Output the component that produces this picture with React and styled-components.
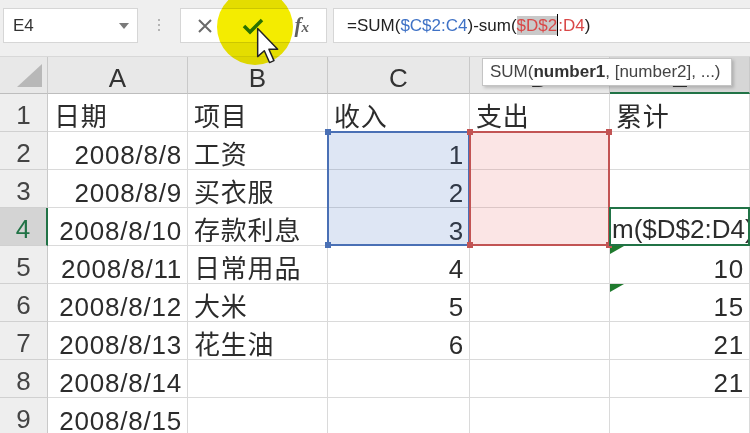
import React from 'react'
import styled, { createGlobalStyle } from 'styled-components'

const GlobalStyle = createGlobalStyle`
  html, body { margin: 0; padding: 0; background: #fff; }
  body { font-family: "Liberation Sans", "Noto Sans CJK SC", sans-serif; }
`

const Window = styled.div`
  position: relative;
  width: 750px;
  height: 433px;
  overflow: hidden;
  background: #fff;
`

// ---- formula bar
const FormulaBar = styled.div`
  display: flex;
  align-items: flex-start;
  height: 57px;
  box-sizing: border-box;
  padding: 8px 0 0 3px;
  background: #efefef;
  border-bottom: 1px solid #d8d8d8;
`
const NameBox = styled.div`
  display: flex;
  align-items: center;
  justify-content: space-between;
  width: 135px;
  height: 35px;
  box-sizing: border-box;
  padding: 0 8px 0 9px;
  background: #fff;
  border: 1px solid #d6d6d6;
  font-size: 17px;
  color: #333;
`
const Grip = styled.div`
  display: flex;
  flex-direction: column;
  align-items: center;
  gap: 3px;
  width: 42px;
  padding-top: 11px;
  span {
    width: 2px;
    height: 2px;
    background: #b4b4b4;
  }
`
const ButtonGroup = styled.div`
  display: grid;
  grid-template-columns: repeat(3, 1fr);
  align-items: center;
  justify-items: center;
  width: 147px;
  height: 35px;
  box-sizing: border-box;
  background: #fff;
  border: 1px solid #d6d6d6;
`
const Fx = styled.span`
  font-family: "Liberation Serif", serif;
  font-style: italic;
  font-weight: bold;
  font-size: 21px;
  color: #606060;
  small { font-size: 15px; }
`
const FormulaInput = styled.div`
  flex: 1;
  margin-left: 6px;
  height: 35px;
  box-sizing: border-box;
  padding-left: 13px;
  background: #fff;
  border: 1px solid #d6d6d6;
  border-right: none;
  font-size: 17px;
  line-height: 33px;
  color: #222;
  white-space: nowrap;
`
const Ref = styled.span`
  color: ${p => p.$color};
  background: ${p => p.$marked ? '#c9c9c9' : 'transparent'};
`
const Caret = styled.span`
  display: inline-block;
  width: 1px;
  height: 22px;
  background: #000;
  vertical-align: -5px;
`

// ---- sheet
const Sheet = styled.div`
  display: grid;
  grid-template-columns: 48px 140px 140px 142px 140px 140px;
  grid-template-rows: 37px repeat(9, 38px);
`
const Corner = styled.div`
  grid-row: 1;
  grid-column: 1;
  display: flex;
  justify-content: flex-end;
  align-items: flex-end;
  padding: 0 5px 6px 0;
  background: #e8e8e8;
  border-right: 1px solid #c9c9c9;
  border-bottom: 1px solid #bdbdbd;
  &::after {
    content: "";
    width: 0;
    height: 0;
    border-left: 25px solid transparent;
    border-bottom: 23px solid #b8b8b8;
  }
`
const ColHead = styled.div`
  grid-row: 1;
  grid-column: ${p => p.$c};
  box-sizing: border-box;
  padding-top: 6px;
  text-align: center;
  font-size: 26px;
  line-height: 30px;
  color: #333;
  background: ${p => p.$selected ? '#d6d6d6' : '#e8e8e8'};
  border-right: 1px solid #c9c9c9;
  border-bottom: ${p => p.$selected ? '2px solid #217346' : '1px solid #bdbdbd'};
`
const RowHead = styled.div`
  grid-row: ${p => p.$r};
  grid-column: 1;
  box-sizing: border-box;
  padding-top: 6px;
  text-align: center;
  font-size: 26px;
  line-height: 30px;
  color: ${p => p.$active ? '#217346' : '#444'};
  background: ${p => p.$active ? '#d4d4d4' : '#eeeeee'};
  border-bottom: 1px solid #d0d0d0;
  border-right: ${p => p.$active ? '2px solid #217346' : '1px solid #c9c9c9'};
`
const Cell = styled.div`
  position: relative;
  grid-row: ${p => p.$r};
  grid-column: ${p => p.$c};
  box-sizing: border-box;
  padding: 8px 5px 0 6px;
  text-align: ${p => p.$right ? 'right' : 'left'};
  font-size: 26px;
  line-height: 30px;
  letter-spacing: 0.8px;
  color: #2c2c2c;
  white-space: nowrap;
  border-right: 1px solid #dadada;
  border-bottom: 1px solid #dadada;
`
const ErrorMark = styled.span`
  position: absolute;
  top: 0;
  left: 0;
  width: 0;
  height: 0;
  border-top: 8px solid #1f7a2e;
  border-right: 14px solid transparent;
`
const ActiveCell = styled.div`
  grid-row: ${p => p.$r};
  grid-column: ${p => p.$c};
  z-index: 3;
  margin: -1px 0 0 -1px;
  box-sizing: border-box;
  padding: 5px 0 0 1px;
  overflow: hidden;
  white-space: nowrap;
  background: #fff;
  border: 2px solid #217346;
  font-size: 26px;
  line-height: 30px;
  color: #2c2c2c;
`
const Range = styled.div`
  position: relative;
  grid-row: 3 / 6;
  grid-column: ${p => p.$c};
  z-index: ${p => p.$z};
  margin: -1px 0 0 -1px;
  border: 2px solid ${p => p.$color};
  background: ${p => p.$fill};
  pointer-events: none;
`
const Handle = styled.span`
  position: absolute;
  width: 6px;
  height: 6px;
  background: ${p => p.$color};
  ${p => p.$top ? 'top: -4px;' : 'bottom: -4px;'}
  ${p => p.$left ? 'left: -4px;' : 'right: -4px;'}
`

// ---- overlays
const Tooltip = styled.div`
  position: absolute;
  left: 482px;
  top: 58px;
  width: 250px;
  height: 28px;
  box-sizing: border-box;
  padding-left: 7px;
  background: #fff;
  border: 1px solid #c4c4c4;
  box-shadow: 2px 2px 3px rgba(0, 0, 0, 0.18);
  font-size: 17px;
  line-height: 25px;
  color: #444;
  white-space: nowrap;
  b { color: #333; }
`
const Spot = styled.div`
  position: absolute;
  left: 217px;
  top: -11px;
  width: 76px;
  height: 76px;
  border-radius: 50%;
  background: #f4ec00;
  mix-blend-mode: multiply;
`
const Pointer = styled.svg`
  position: absolute;
  left: 256px;
  top: 27px;
`

const rows = [
  [['日期'], ['项目'], ['收入'], ['支出'], ['累计']],
  [['2008/8/8', 1], ['工资'], ['1', 1], [''], ['']],
  [['2008/8/9', 1], ['买衣服'], ['2', 1], [''], ['']],
  [['2008/8/10', 1], ['存款利息'], ['3', 1], [''], null],
  [['2008/8/11', 1], ['日常用品'], ['4', 1], [''], ['10', 1, 1]],
  [['2008/8/12', 1], ['大米'], ['5', 1], [''], ['15', 1, 1]],
  [['2008/8/13', 1], ['花生油'], ['6', 1], [''], ['21', 1]],
  [['2008/8/14', 1], [''], [''], [''], ['21', 1]],
  [['2008/8/15', 1], [''], [''], [''], ['']],
]

export default function App() {
  return (
    <Window>
      <GlobalStyle />
      <FormulaBar>
        <NameBox>
          E4
          <svg width="10" height="6" viewBox="0 0 10 6"><path d="M0 0h10L5 6z" fill="#7a7a7a" /></svg>
        </NameBox>
        <Grip><span /><span /><span /></Grip>
        <ButtonGroup>
          <svg width="16" height="16" viewBox="0 0 16 16">
            <path d="M2 2L14 14M14 2L2 14" stroke="#6a6a6a" strokeWidth="2" />
          </svg>
          <svg width="22" height="18" viewBox="0 0 22 18">
            <path d="M2 9L8 15L20 3" stroke="#2a7a2e" strokeWidth="3.5" fill="none" />
          </svg>
          <Fx>f<small>x</small></Fx>
        </ButtonGroup>
        <FormulaInput>
          =SUM(<Ref $color="#3f72c6">$C$2:C4</Ref>)-sum(<Ref $color="#d94848" $marked>$D$2</Ref><Caret /><Ref $color="#d94848">:D4</Ref>)
        </FormulaInput>
      </FormulaBar>

      <Sheet>
        <Corner />
        {['A', 'B', 'C', 'D', 'E'].map((l, i) => (
          <ColHead key={l} $c={i + 2} $selected={l === 'E'}>{l}</ColHead>
        ))}
        {rows.map((row, ri) => (
          <React.Fragment key={ri}>
            <RowHead $r={ri + 2} $active={ri === 3}>{ri + 1}</RowHead>
            {row.map((cell, ci) => cell === null ? (
              <ActiveCell key={ci} $r={ri + 2} $c={ci + 2}>m($D$2:D4)</ActiveCell>
            ) : (
              <Cell key={ci} $r={ri + 2} $c={ci + 2} $right={cell[1]}>
                {cell[2] && <ErrorMark />}
                {cell[0]}
              </Cell>
            ))}
          </React.Fragment>
        ))}
        <Range $c={4} $z={1} $color="#4a70b5" $fill="rgba(70, 115, 195, 0.18)">
          <Handle $color="#4a70b5" $top $left />
          <Handle $color="#4a70b5" $left />
        </Range>
        <Range $c={5} $z={2} $color="#c25454" $fill="rgba(235, 110, 110, 0.18)">
          <Handle $color="#c25454" $top $left />
          <Handle $color="#c25454" $top />
          <Handle $color="#c25454" $left />
          <Handle $color="#c25454" />
        </Range>
      </Sheet>

      <Tooltip>SUM(<b>number1</b>, [number2], ...)</Tooltip>
      <Spot />
      <Pointer width="30" height="40" viewBox="0 0 20 27">
        <path d="M1 1V20L5.5 16L9 24L12 22.7L8.6 15H14.5Z" fill="#fff" stroke="#222" strokeWidth="1" strokeLinejoin="round" />
      </Pointer>
    </Window>
  )
}
